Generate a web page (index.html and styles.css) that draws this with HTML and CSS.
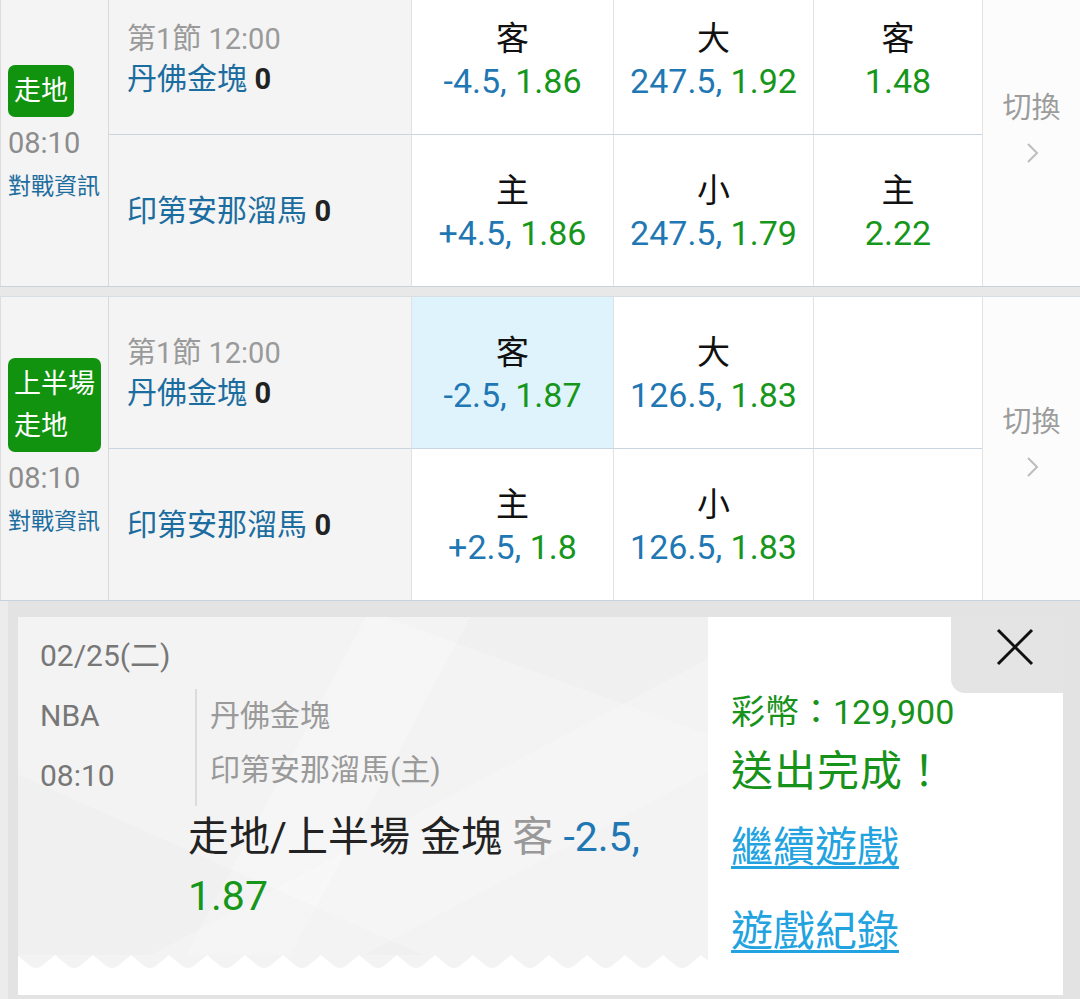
FILE: index.html
```html
<!DOCTYPE html>
<html lang="zh-Hant">
<head>
    <meta charset="UTF-8">
    <meta name="viewport" content="width=device-width, initial-scale=1.0">
    <title>走地投注</title>
    <link rel="stylesheet" href="styles.css">
</head>
<body>
    <div class="board">
        <div class="game first">
            <div class="info">
                <span class="badge">走地</span>
                <span class="kick">08:10</span>
                <span class="stats">對戰資訊</span>
            </div>
            <div class="team top"><span class="period">第1節 12:00</span><span class="name">丹佛金塊 <b>0</b></span></div>
            <div class="odds top"><span class="pick">客</span><span class="price"><span class="line">-4.5,</span> <span class="rate">1.86</span></span></div>
            <div class="odds top"><span class="pick">大</span><span class="price"><span class="line">247.5,</span> <span class="rate">1.92</span></span></div>
            <div class="odds top"><span class="pick">客</span><span class="price"><span class="rate">1.48</span></span></div>
            <div class="switch">
                <span>切換</span>
                <svg class="chev" width="14" height="22" viewBox="0 0 14 22"><path d="M2 2 L11 11 L2 20" fill="none" stroke="#bdbdbd" stroke-width="2"/></svg>
            </div>
            <div class="team"><span class="name">印第安那溜馬 <b>0</b></span></div>
            <div class="odds"><span class="pick">主</span><span class="price"><span class="line">+4.5,</span> <span class="rate">1.86</span></span></div>
            <div class="odds"><span class="pick">小</span><span class="price"><span class="line">247.5,</span> <span class="rate">1.79</span></span></div>
            <div class="odds"><span class="pick">主</span><span class="price"><span class="rate">2.22</span></span></div>
        </div>

        <div class="game">
            <div class="info">
                <span class="badge">上半場<br>走地</span>
                <span class="kick">08:10</span>
                <span class="stats">對戰資訊</span>
            </div>
            <div class="team top"><span class="period">第1節 12:00</span><span class="name">丹佛金塊 <b>0</b></span></div>
            <div class="odds top picked"><span class="pick">客</span><span class="price"><span class="line">-2.5,</span> <span class="rate">1.87</span></span></div>
            <div class="odds top"><span class="pick">大</span><span class="price"><span class="line">126.5,</span> <span class="rate">1.83</span></span></div>
            <div class="odds top"></div>
            <div class="switch">
                <span>切換</span>
                <svg class="chev" width="14" height="22" viewBox="0 0 14 22"><path d="M2 2 L11 11 L2 20" fill="none" stroke="#bdbdbd" stroke-width="2"/></svg>
            </div>
            <div class="team"><span class="name">印第安那溜馬 <b>0</b></span></div>
            <div class="odds"><span class="pick">主</span><span class="price"><span class="line">+2.5,</span> <span class="rate">1.8</span></span></div>
            <div class="odds"><span class="pick">小</span><span class="price"><span class="line">126.5,</span> <span class="rate">1.83</span></span></div>
            <div class="odds"></div>
        </div>
    </div>

    <div class="result">
        <div class="slip">
            <div class="ticket">
                <div class="ticket-body">
                    <div class="date">02/25(二)</div>
                    <div class="match">
                        <div class="meta">
                            <div>NBA</div>
                            <div>08:10</div>
                        </div>
                        <div class="teams">
                            <div>丹佛金塊</div>
                            <div>印第安那溜馬(主)</div>
                        </div>
                    </div>
                    <div class="bet">走地/上半場 金塊 <span class="side">客</span> <span class="line">-2.5,</span> <span class="rate">1.87</span></div>
                </div>
                <svg class="zigzag" width="690" height="14" viewBox="0 0 690 14">
                    <defs>
                        <pattern id="zz" x="-1" y="0" width="38" height="14" patternUnits="userSpaceOnUse">
                            <path d="M0 0 H38 L25 11 Q19 15 13 11 Z" fill="#f3f3f3"/>
                        </pattern>
                    </defs>
                    <rect width="690" height="14" fill="url(#zz)"/>
                </svg>
            </div>
            <div class="notice">
                <div class="coins">彩幣：129,900</div>
                <div class="done">送出完成！</div>
                <a class="link first-link" href="#">繼續遊戲</a>
                <a class="link" href="#">遊戲紀錄</a>
            </div>
            <div class="close">
                <svg width="38" height="38" viewBox="0 0 38 38"><path d="M2 2 L36 36 M36 2 L2 36" stroke="#111" stroke-width="3"/></svg>
            </div>
        </div>
    </div>
</body>
</html>
```

FILE: styles.css
```css
* { box-sizing: border-box; }
body { margin: 0; font-family: Roboto, "Noto Sans CJK TC", sans-serif; background: #e4e4e4; color: #111; overflow: hidden; }

.board { background: #e8e8e8; }
.game {
    display: grid; grid-template-columns: 108px 303px 202px 200px 169px 98px; grid-template-rows: 152px 151px;
    background: #fff; border-bottom: 1px solid #c6d3dd; border-top: 1px solid #d8dfe4; margin-bottom: 9px;
}
.game.first { margin-top: -18px; }
.game:last-child { margin-bottom: 0; }

.info {
    grid-row: span 2; background: #f4f4f4; border-left: 1px solid #dedede;
    display: flex; flex-direction: column; align-items: flex-start; justify-content: center; padding-left: 7px;
}
.badge { background: #12930f; color: #fff; font-size: 27px; line-height: 42px; padding: 5px 6px; border-radius: 7px; }
.kick { font-size: 29px; line-height: 52px; color: #8c8c8c; }
.stats { font-size: 23px; line-height: 36px; color: #1d6d9e; }

.team {
    background: #f4f4f4; border-left: 1px solid #d9d9d9; padding-left: 18px;
    display: flex; flex-direction: column; justify-content: center; font-size: 29px; line-height: 40px;
}
.period { color: #9a9a9a; }
.name { color: #1c6d9f; font-size: 30px; }
.name b { color: #222; font-family: Roboto, sans-serif; font-size: 29px; }

.top { border-bottom: 1px solid #c9d5df; }

.odds {
    border-left: 1px solid #dfe2e5; display: flex; flex-direction: column; align-items: center; justify-content: center;
    font-size: 34px; line-height: 42px; padding-top: 2px;
}
.odds.picked { background: #dff3fc; }
.pick { color: #111; font-size: 33px; }
.line { color: #1f77b3; }
.rate { color: #16961a; }

.switch {
    grid-row: span 2; background: #fcfcfc; border-left: 1px solid #e2e2e2;
    display: flex; flex-direction: column; align-items: center; justify-content: center;
    font-size: 29px; line-height: 40px; color: #9c9c9c; padding-bottom: 4px;
}
.chev { margin: 14px 0 14px 2px; }

.result { padding: 16px 17px 4px 18px; background: linear-gradient(90deg, #ececec 8px, #e3e3e3 8px); }
.slip { position: relative; display: flex; height: 378px; background: #fff; }

.ticket { width: 690px; display: flex; flex-direction: column; }
.ticket-body {
    flex: 1; padding: 9px 0 0 22px;
    background:
        linear-gradient(152deg, transparent 58%, rgba(255,255,255,0.2) 58%, rgba(255,255,255,0.2) 74%, transparent 74%),
        linear-gradient(24deg, rgba(0,0,0,0.012) 28%, transparent 28%),
        linear-gradient(118deg, transparent 40%, rgba(255,255,255,0.22) 40%, rgba(255,255,255,0.22) 52%, transparent 52%),
        linear-gradient(200deg, rgba(0,0,0,0.012) 20%, transparent 20%),
        #f3f3f3;
}
.zigzag { display: block; margin-bottom: 26px; }
.date { font-size: 30px; line-height: 60px; color: #777; }
.match { display: flex; }
.meta { width: 155px; font-size: 30px; line-height: 60px; color: #777; }
.teams { margin-top: 3px; border-left: 2px solid #dcdcdc; padding-left: 13px; font-size: 30px; line-height: 54px; color: #9a9a9a; }
.bet { margin: 2px 0 0 148px; width: 500px; font-size: 41px; line-height: 59px; color: #222; }
.bet .side { color: #999; }

.notice { flex: 1; padding: 72px 0 0 23px; display: flex; flex-direction: column; align-items: flex-start; }
.coins { font-size: 34px; line-height: 46px; color: #17921a; }
.done { margin-top: 9px; font-size: 42px; line-height: 56px; color: #17921a; letter-spacing: 1px; }
.link { font-size: 42px; line-height: 56px; color: #22a3df; text-decoration: underline; text-decoration-thickness: 3px; text-underline-offset: 4px; margin-top: 28px; }
.link.first-link { margin-top: 20px; }

.close {
    position: absolute; top: 0; right: 0; width: 112px; height: 76px; background: #e4e4e4;
    border-bottom-left-radius: 14px; display: flex; align-items: center; justify-content: center;
    padding: 0 0 16px 16px;
}
```
